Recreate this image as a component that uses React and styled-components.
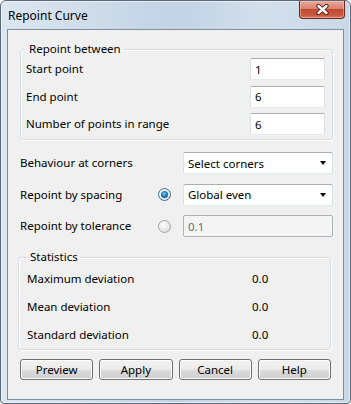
import React from "react";
import styled, { createGlobalStyle } from "styled-components";

const GlobalStyle = createGlobalStyle`
  html, body {
    margin: 0;
    padding: 0;
    background: #ffffff;
  }
  body {
    font-family: "Noto Sans", "Open Sans", sans-serif;
    font-size: 11.5px;
    color: #000;
  }
`;

const Frame = styled.div`
  box-sizing: border-box;
  width: 351px;
  height: 404px;
  display: flex;
  flex-direction: column;
  border: 1px solid #5b6878;
  border-radius: 6px 6px 4px 4px;
  background: linear-gradient(
    to right,
    #dce6f1 0%,
    #cfdcea 25%,
    #c2d3e4 50%,
    #d3dfeb 75%,
    #c9d8e8 100%
  );
  padding: 0 6px 3px 6px;
  box-shadow: inset 0 0 0 1px rgba(255, 255, 255, 0.55);
`;

const TitleBar = styled.div`
  height: 28px;
  display: flex;
  align-items: flex-start;
  justify-content: space-between;
  flex-shrink: 0;
`;

const Title = styled.div`
  font-size: 12px;
  line-height: 16px;
  margin-top: 7px;
  margin-left: 1px;
  color: #000;
`;

const CloseButton = styled.div`
  width: 46px;
  height: 18px;
  margin-right: -1px;
  box-sizing: border-box;
  border: 1px solid #6b2a1f;
  border-top: none;
  border-radius: 0 0 4px 4px;
  background: linear-gradient(
    to bottom,
    #e9a99b 0%,
    #d8806e 45%,
    #c24a33 50%,
    #c85a40 85%,
    #d9806a 100%
  );
  box-shadow: inset 0 0 0 1px rgba(255, 210, 200, 0.45);
  display: flex;
  align-items: center;
  justify-content: center;
`;

const Client = styled.div`
  flex: 1;
  box-sizing: border-box;
  border: 1px solid #7f8e9e;
  background: #f0f0f0;
  padding: 11px 10px 0 12px;
  display: flex;
  flex-direction: column;
`;

const GroupBox = styled.fieldset`
  margin: ${({ $shift }) => ($shift ? "12px 2px 0 -2px" : "0")};
  min-width: 0;
  border: 1px solid #d5dfe5;
  border-radius: 3px;
  box-shadow: 1px 1px 0 #ffffff, inset 1px 1px 0 #ffffff;
  padding: ${({ $pad }) => $pad};
`;

const Legend = styled.legend`
  padding: 0 2px;
  margin-left: 1px;
  line-height: 16px;
  font-size: 11.5px;
`;

const FieldGrid = styled.div`
  display: grid;
  grid-template-columns: 1fr 75px;
  grid-auto-rows: 22px;
  row-gap: 5.5px;
  align-items: center;
`;

const Label = styled.span`
  white-space: nowrap;
  line-height: 16px;
`;

const TextBox = styled.div`
  grid-column: ${({ $col }) => $col || "auto"};
  box-sizing: border-box;
  height: 22px;
  display: flex;
  align-items: center;
  padding-left: 4px;
  border: 1px solid;
  border-color: #abadb3 #dbdfe6 #e3e9ef #dbdfe6;
  border-radius: 2px;
  background: ${({ $disabled }) => ($disabled ? "#f4f4f4" : "#ffffff")};
  color: ${({ $disabled }) => ($disabled ? "#6d6d6d" : "#000")};
  ${({ $disabled }) => ($disabled ? "border-color: #adb2b5;" : "")}
`;

const OptionsGrid = styled.div`
  margin-top: 12px;
  display: grid;
  grid-template-columns: 1fr 13px 150px;
  column-gap: 12px;
  grid-auto-rows: 22px;
  row-gap: 9.5px;
  align-items: center;
`;

const Combo = styled.div`
  grid-column: 3;
  box-sizing: border-box;
  height: 22px;
  display: flex;
  align-items: center;
  justify-content: space-between;
  padding: 0 6px 0 4px;
  border: 1px solid;
  border-color: #abadb3 #dbdfe6 #e3e9ef #dbdfe6;
  border-radius: 2px;
  background: #ffffff;
`;

const Arrow = styled.span`
  width: 0;
  height: 0;
  border-left: 3.5px solid transparent;
  border-right: 3.5px solid transparent;
  border-top: 4px solid #000;
`;

const Radio = styled.span`
  grid-column: 2;
  box-sizing: border-box;
  width: 13px;
  height: 13px;
  border-radius: 50%;
  border: 1px solid ${({ $checked }) => ($checked ? "#3d6f99" : "#a4a6a8")};
  background: radial-gradient(circle at 40% 35%, #ffffff 0%, #e6e6e6 60%, #cfcfcf 100%);
  display: flex;
  align-items: center;
  justify-content: center;
  &::after {
    content: "";
    display: ${({ $checked }) => ($checked ? "block" : "none")};
    width: 7px;
    height: 7px;
    border-radius: 50%;
    background: radial-gradient(circle at 45% 40%, #7fd0f6 0%, #1c7fbf 45%, #0b3f66 100%);
  }
`;

const StatsGrid = styled.div`
  display: grid;
  grid-template-columns: 1fr 72px;
  grid-auto-rows: 28px;
  align-items: center;
`;

const ButtonRow = styled.div`
  margin-top: 9px;
  margin-right: 2px;
  display: grid;
  grid-template-columns: repeat(4, 1fr);
  column-gap: 6px;
`;

const Button = styled.div`
  box-sizing: border-box;
  height: 21px;
  display: flex;
  align-items: center;
  justify-content: center;
  border: 1px solid #707070;
  border-radius: 3px;
  background: linear-gradient(
    to bottom,
    #f2f2f2 0%,
    #ebebeb 50%,
    #dddddd 51%,
    #cfcfcf 100%
  );
  box-shadow: inset 0 0 0 1px #fcfcfc;
`;

function CloseGlyph() {
  return (
    <svg width="13" height="11" viewBox="0 0 13 11">
      <path d="M2.5 2 L10.5 9 M10.5 2 L2.5 9" stroke="#4a1a12" strokeWidth="4.2" strokeLinecap="round" />
      <path d="M2.5 2 L10.5 9 M10.5 2 L2.5 9" stroke="#ffffff" strokeWidth="2.4" strokeLinecap="round" />
    </svg>
  );
}

const rangeFields = [
  { label: "Start point", value: "1" },
  { label: "End point", value: "6" },
  { label: "Number of points in range", value: "6" },
];

const stats = [
  { label: "Maximum deviation", value: "0.0" },
  { label: "Mean deviation", value: "0.0" },
  { label: "Standard deviation", value: "0.0" },
];

export default function App() {
  return (
    <>
      <GlobalStyle />
      <Frame>
        <TitleBar>
          <Title>Repoint Curve</Title>
          <CloseButton>
            <CloseGlyph />
          </CloseButton>
        </TitleBar>
        <Client>
          <GroupBox $pad="1px 7px 4px 5px">
            <Legend>Repoint between</Legend>
            <FieldGrid>
              {rangeFields.map((f) => (
                <React.Fragment key={f.label}>
                  <Label>{f.label}</Label>
                  <TextBox>{f.value}</TextBox>
                </React.Fragment>
              ))}
            </FieldGrid>
          </GroupBox>

          <OptionsGrid>
            <Label>Behaviour at corners</Label>
            <Combo>
              Select corners
              <Arrow />
            </Combo>

            <Label>Repoint by spacing</Label>
            <Radio $checked />
            <Combo>
              Global even
              <Arrow />
            </Combo>

            <Label>Repoint by tolerance</Label>
            <Radio />
            <TextBox $disabled $col={3}>
              0.1
            </TextBox>
          </OptionsGrid>

          <GroupBox $shift $pad="0 6px 0 8px">
            <Legend>Statistics</Legend>
            <StatsGrid>
              {stats.map((s) => (
                <React.Fragment key={s.label}>
                  <Label>{s.label}</Label>
                  <Label>{s.value}</Label>
                </React.Fragment>
              ))}
            </StatsGrid>
          </GroupBox>

          <ButtonRow>
            <Button>Preview</Button>
            <Button>Apply</Button>
            <Button>Cancel</Button>
            <Button>Help</Button>
          </ButtonRow>
        </Client>
      </Frame>
    </>
  );
}
